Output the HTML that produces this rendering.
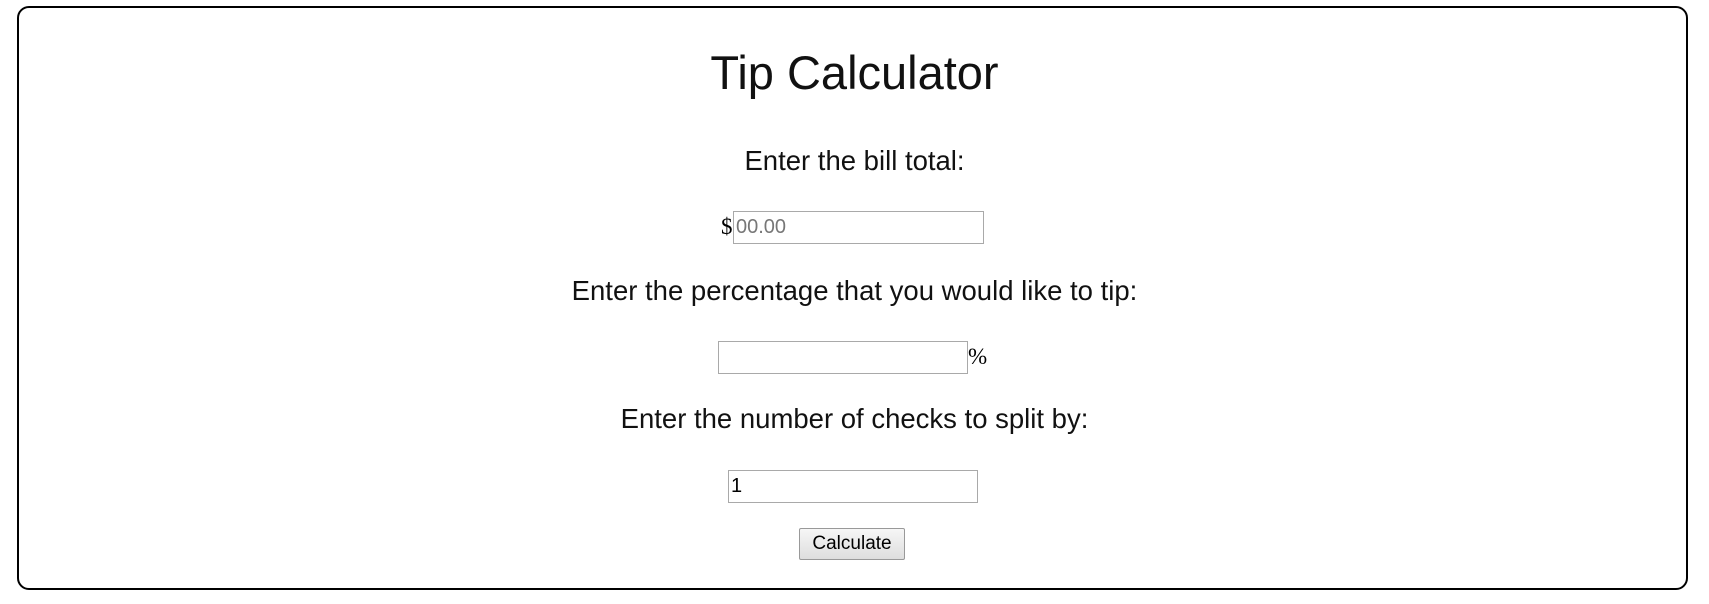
<!DOCTYPE html>
<html><head><meta charset="utf-8"><style>
html,body{margin:0;padding:0;background:#fff;width:1709px;height:604px;overflow:hidden;position:relative}
.box{position:absolute;left:17px;top:6px;width:1667px;height:580px;border:2px solid #000;border-radius:12px}
.t{position:absolute;left:0;width:1709px;text-align:center;font-family:"Liberation Sans",sans-serif;color:#111;font-weight:normal;white-space:nowrap}
.in{position:absolute;box-sizing:border-box;border:1px solid #a9a9a9;background:#fff;font-family:"Liberation Sans",sans-serif;font-size:20px;padding:0 2px;line-height:31px}
.sym{position:absolute;font-family:"Liberation Serif",serif;font-size:23px;color:#000}
.btn{position:absolute;left:799px;top:528px;width:106px;height:32px;box-sizing:border-box;border:1px solid #999;border-radius:2px;background:linear-gradient(#f6f6f6,#dedede);font-family:"Liberation Sans",sans-serif;font-size:19px;text-align:center;line-height:30px;color:#000}
</style></head><body>
<div class="box"></div>
<div class="t" style="top:45px;font-size:47px;line-height:56px">Tip Calculator</div>
<div class="t" style="top:144px;font-size:27.5px;line-height:34px">Enter the bill total:</div>
<div class="sym" style="left:721px;top:214px">$</div>
<div class="in" style="left:733px;top:211px;width:251px;height:33px;color:#777">00.00</div>
<div class="t" style="top:274px;font-size:27.5px;line-height:34px">Enter the percentage that you would like to tip:</div>
<div class="in" style="left:718px;top:341px;width:250px;height:33px"></div>
<div class="sym" style="left:968px;top:344px">%</div>
<div class="t" style="top:402px;font-size:27.5px;line-height:34px">Enter the number of checks to split by:</div>
<div class="in" style="left:728px;top:470px;width:250px;height:33px;color:#000">1</div>
<div class="btn">Calculate</div>
</body></html>
